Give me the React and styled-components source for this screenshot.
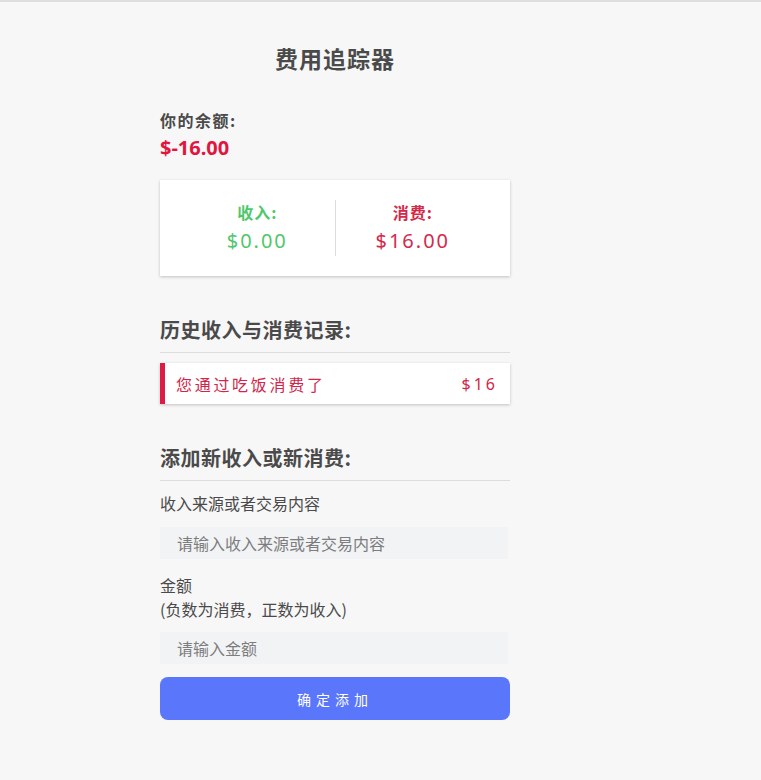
import React, { useState } from "react";
import styled, { createGlobalStyle } from "styled-components";

const GlobalStyle = createGlobalStyle`
  * { box-sizing: border-box; }
  body {
    margin: 0;
    background: #f7f7f7;
    border-top: 2px solid #dedede;
    font-family: "Noto Sans CJK SC", "Noto Sans", sans-serif;
    color: #4a4a4a;
  }
`;

const Page = styled.div`
  width: 350px;
  margin: 0 auto 0 160px;
  padding-top: 38px;
  padding-bottom: 60px;
`;

const Title = styled.h2`
  margin: 0 0 32px;
  text-align: center;
  font-size: 23px;
  font-weight: 700;
  line-height: 36px;
  letter-spacing: 1px;
`;

const BalanceLabel = styled.h4`
  margin: 0;
  font-size: 16px;
  font-weight: 700;
  line-height: 24px;
  letter-spacing: 1.5px;
`;

const Balance = styled.h1`
  margin: 3px 0 19px;
  font-size: 20px;
  font-weight: 700;
  line-height: 26px;
  color: #e0163f;
  font-family: "Noto Sans", "Noto Sans CJK SC", sans-serif;
`;

const Card = styled.div`
  display: flex;
  background: #fff;
  box-shadow: 0 1px 3px rgba(0, 0, 0, 0.22);
  padding: 20px 0;
`;

const Column = styled.div`
  flex: 1;
  text-align: center;
  padding-left: 20px;
  color: ${(p) => p.$color};
  & + & {
    padding-left: 0;
    padding-right: 20px;
    border-left: 1px solid #dddddd;
  }
`;

const ColLabel = styled.h4`
  margin: 0;
  font-size: 16px;
  font-weight: 700;
  line-height: 24px;
  letter-spacing: 1px;
`;

const ColValue = styled.p`
  margin: 2px 0 0;
  font-size: 20px;
  line-height: 30px;
  letter-spacing: 2px;
  font-family: "Noto Sans", "Noto Sans CJK SC", sans-serif;
`;

const SectionTitle = styled.h3`
  margin: 40px 0 0;
  padding-bottom: 8px;
  border-bottom: 1px solid #dddddd;
  font-size: 20px;
  font-weight: 700;
  line-height: 28px;
  letter-spacing: 0.5px;
`;

const List = styled.ul`
  list-style: none;
  margin: 10px 0 0;
  padding: 0;
`;

const Item = styled.li`
  display: flex;
  justify-content: space-between;
  align-items: center;
  height: 41px;
  padding: 0 12px 0 11px;
  background: #fff;
  box-shadow: 0 1px 3px rgba(0, 0, 0, 0.22);
  border-left: 5px solid ${(p) => (p.$minus ? "#dc1c45" : "#2ecc71")};
  color: ${(p) => (p.$minus ? "#d3254a" : "#2ecc71")};
  font-size: 16px;
  letter-spacing: 2.7px;
`;

const Amount = styled.span`
  font-family: "Noto Sans", "Noto Sans CJK SC", sans-serif;
  letter-spacing: 3px;
`;

const Form = styled.form`
  display: flex;
  flex-direction: column;
`;

const Label = styled.label`
  margin-top: ${(p) => p.$gap || 10}px;
  font-size: 16px;
  line-height: 24px;
  color: #4a4a4a;
`;

const Input = styled.input`
  width: 348px;
  height: 32px;
  margin-top: ${(p) => p.$gap || 12}px;
  padding: 0 17px;
  border: none;
  background: #f2f3f5;
  font-family: inherit;
  font-size: 16px;
  color: #333;
  outline: none;
  &::placeholder {
    color: #7d7d7d;
  }
`;

const Button = styled.button`
  height: 43px;
  margin-top: 13px;
  border: none;
  border-radius: 8px;
  background: #5a76fa;
  color: #fff;
  font-family: inherit;
  font-size: 14px;
  letter-spacing: 5px;
  cursor: pointer;
`;

export default function App() {
  const [text, setText] = useState("");
  const [amount, setAmount] = useState("");
  const items = [{ id: 1, text: "您通过吃饭消费了", amount: -16 }];

  return (
    <>
      <GlobalStyle />
      <Page>
        <Title>费用追踪器</Title>
        <BalanceLabel>你的余额:</BalanceLabel>
        <Balance>$-16.00</Balance>
        <Card>
          <Column $color="#4fc76b">
            <ColLabel>收入:</ColLabel>
            <ColValue>$0.00</ColValue>
          </Column>
          <Column $color="#d42a4c">
            <ColLabel>消费:</ColLabel>
            <ColValue>$16.00</ColValue>
          </Column>
        </Card>
        <SectionTitle>历史收入与消费记录:</SectionTitle>
        <List>
          {items.map((item) => (
            <Item key={item.id} $minus={item.amount < 0}>
              <span>{item.text}</span>
              <Amount>${Math.abs(item.amount)}</Amount>
            </Item>
          ))}
        </List>
        <SectionTitle>添加新收入或新消费:</SectionTitle>
        <Form onSubmit={(e) => e.preventDefault()}>
          <Label>收入来源或者交易内容</Label>
          <Input
            type="text"
            placeholder="请输入收入来源或者交易内容"
            value={text}
            onChange={(e) => setText(e.target.value)}
          />
          <Label $gap={14}>
            金额
            <br />
            (负数为消费，正数为收入)
          </Label>
          <Input
            $gap={11}
            type="number"
            placeholder="请输入金额"
            value={amount}
            onChange={(e) => setAmount(e.target.value)}
          />
          <Button type="submit">确定添加</Button>
        </Form>
      </Page>
    </>
  );
}
